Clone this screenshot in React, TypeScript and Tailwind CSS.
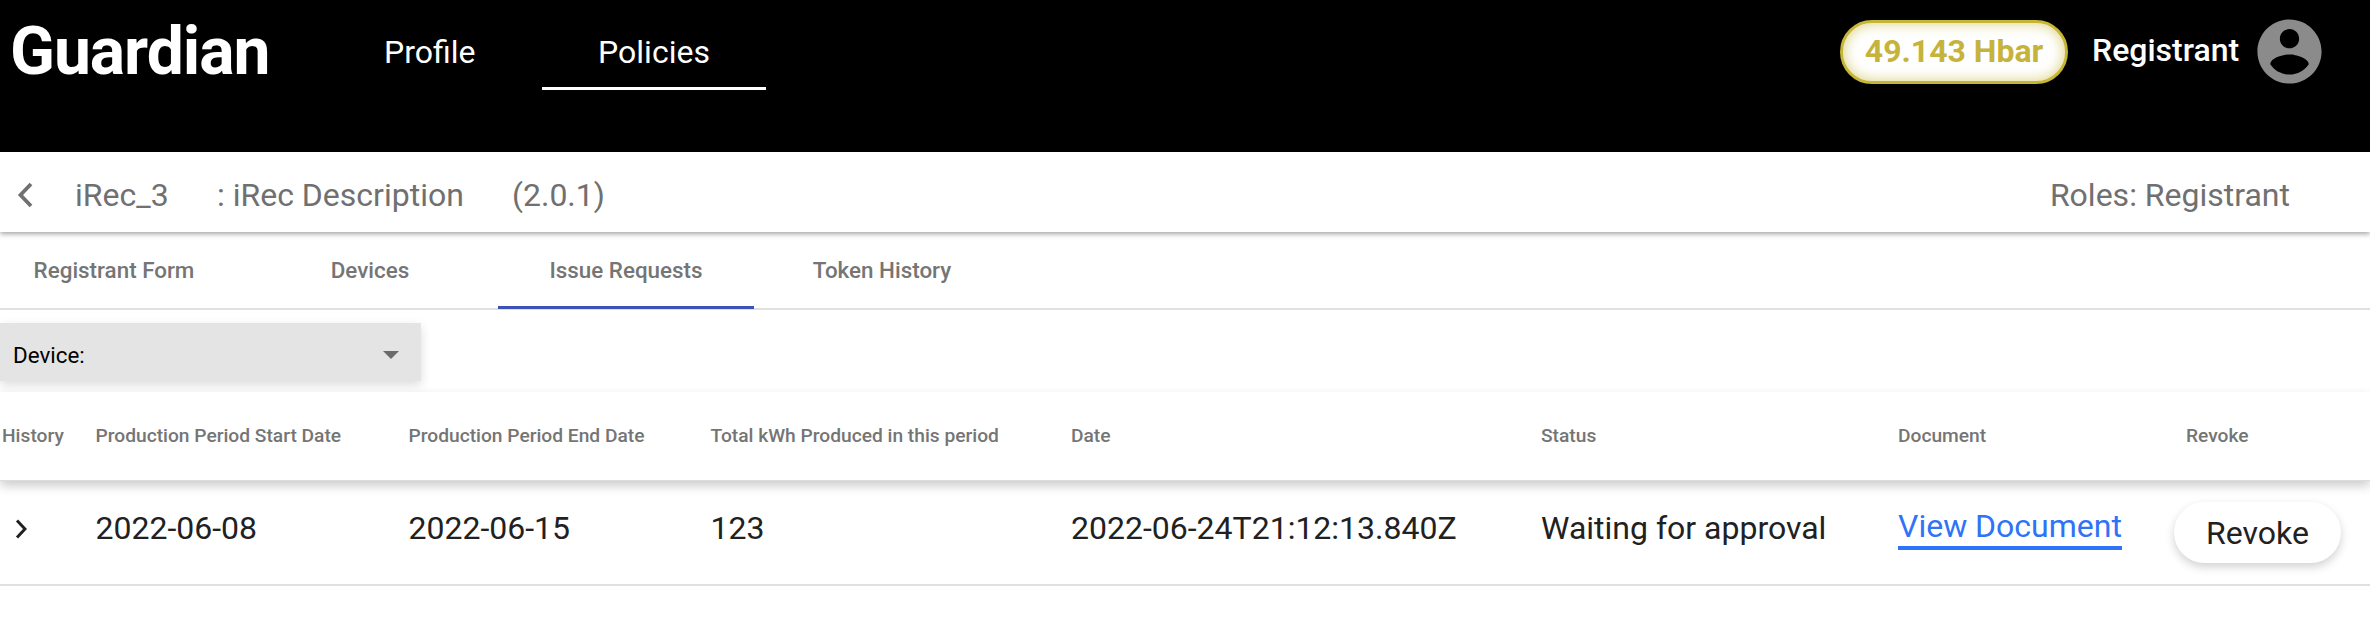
import React from "react";

const tabs = [
  { label: "Registrant Form", active: false },
  { label: "Devices", active: false },
  { label: "Issue Requests", active: true },
  { label: "Token History", active: false },
];

const columns =
  "grid grid-cols-[93.5px_313px_302px_360.5px_470px_357px_288px_1fr]";

function Header() {
  return (
    <header className="flex h-[152px] items-start bg-black text-white">
      <div className="ml-[10px] mt-[12px] w-[532px] flex">
        <h1 className="w-[374px] text-[66px] leading-[80px] font-bold tracking-[-1.05px]">Guardian</h1>
        <a className="mt-[20px] text-[32px] leading-[40px]">Profile</a>
      </div>
      <a className="mt-[32px] h-[58px] w-[224px] border-b-[3px] border-white text-center text-[32px] leading-[40px]">
        Policies
      </a>
      <div className="ml-auto mr-[42px] flex items-start">
        <div className="mt-[20px] flex h-[64px] w-[228px] items-center justify-center rounded-full border-[3px] border-[#c6b635] bg-white pb-[2px] text-[32px] leading-[38px] font-bold text-[#c6b33c] shadow-[inset_0_0_14px_rgba(198,182,53,0.65)]">
          49.143 Hbar
        </div>
        <span className="ml-[24px] mt-[30px] w-[159px] text-[32px] leading-[40px] font-medium">Registrant</span>
        <svg viewBox="0 0 24 24" className="mt-[13px] size-[77px]" fill="#8b8b8b">
          <path d="M12 2C6.48 2 2 6.48 2 12s4.48 10 10 10 10-4.48 10-10S17.52 2 12 2zm0 3c1.66 0 3 1.34 3 3s-1.34 3-3 3-3-1.34-3-3 1.34-3 3-3zm0 14.2c-2.5 0-4.71-1.28-6-3.22.03-1.99 4-3.08 6-3.08 1.99 0 5.97 1.09 6 3.08-1.29 1.94-3.5 3.22-6 3.22z" />
        </svg>
      </div>
    </header>
  );
}

function PolicyBar() {
  return (
    <div className="relative z-10 flex h-[80px] items-start bg-white pt-[23px] text-[32px] leading-[40px] text-[#707070] shadow-[0_2px_5px_rgba(0,0,0,0.36)]">
      <svg viewBox="0 0 16 26" className="ml-[17px] mt-[7px] h-[26px] w-[16px]" fill="none" stroke="#707070" strokeWidth="3.8">
        <path d="M14 2 3.5 13 14 24" />
      </svg>
      <span className="ml-[42px] w-[142px]">iRec_3</span>
      <span className="w-[295px]">: iRec Description</span>
      <span>(2.0.1)</span>
      <span className="ml-auto mr-[80px]">Roles: Registrant</span>
    </div>
  );
}

function Tabs() {
  return (
    <nav className="-ml-[14px] flex h-[78px] border-b-2 border-[#e0e0e0]">
      {tabs.map((t) => (
        <a
          key={t.label}
          className={
            t.active
              ? "h-[77px] w-[256px] border-b-[3px] border-[#3f51b5] pt-[23px] text-center text-[22.4px] leading-[30px] font-medium text-[#757575]"
              : "h-[77px] w-[256px] pt-[23px] text-center text-[22.4px] leading-[30px] font-medium text-[#757575]"
          }
        >
          {t.label}
        </a>
      ))}
    </nav>
  );
}

function DeviceFilter() {
  return (
    <div className="h-[82px] pt-[13px]">
      <div className="flex h-[58px] w-[421px] items-start bg-[#e4e4e4] pl-[13px] pr-[22px] text-[22.4px] leading-[30px] text-black shadow-[0_4px_10px_rgba(0,0,0,0.14)]">
        <span className="pt-[17px]">Device:</span>
        <svg viewBox="0 0 16 8" className="mt-[28px] ml-auto h-[8px] w-[16px]" fill="#6b6b6b">
          <path d="M0 0h16L8 8z" />
        </svg>
      </div>
    </div>
  );
}

function RequestsTable() {
  return (
    <section>
      <div
        className={`${columns} relative z-10 h-[89px] border-b border-[#dcdcdc] bg-white pl-[2px] pt-[30px] text-[19.2px] leading-[28px] font-medium text-[#757575] shadow-[0_5px_10px_rgba(0,0,0,0.2)]`}
      >
        <span>History</span>
        <span>Production Period Start Date</span>
        <span>Production Period End Date</span>
        <span>Total kWh Produced in this period</span>
        <span>Date</span>
        <span>Status</span>
        <span>Document</span>
        <span>Revoke</span>
      </div>
      <div className={`${columns} h-[105px] border-b-2 border-[#e0e0e0] pl-[2px] text-[32px] leading-[40px] text-[#212121]`}>
        <svg viewBox="0 0 12 20" className="ml-[13px] mt-[38px] h-[20px] w-[12px]" fill="none" stroke="#212121" strokeWidth="3">
          <path d="m2 1.5 8 8.5-8 8.5" />
        </svg>
        <span className="mt-[27px]">2022-06-08</span>
        <span className="mt-[27px]">2022-06-15</span>
        <span className="mt-[27px]">123</span>
        <span className="mt-[27px]">2022-06-24T21:12:13.840Z</span>
        <span className="mt-[27px]">Waiting for approval</span>
        <a className="mt-[25px] h-[44px] justify-self-start border-b-4 border-[#2f73f6] whitespace-nowrap text-[#2f73f6]">View Document</a>
        <button className="-ml-[12px] mt-[21px] h-[61px] w-[167px] rounded-full bg-white pt-px shadow-[0_4px_10px_rgba(0,0,0,0.18)]">
          Revoke
        </button>
      </div>
    </section>
  );
}

export default function App() {
  return (
    <div className="h-[618px] w-[2370px] overflow-hidden bg-white font-['Roboto',sans-serif]">
      <Header />
      <PolicyBar />
      <Tabs />
      <DeviceFilter />
      <RequestsTable />
    </div>
  );
}
